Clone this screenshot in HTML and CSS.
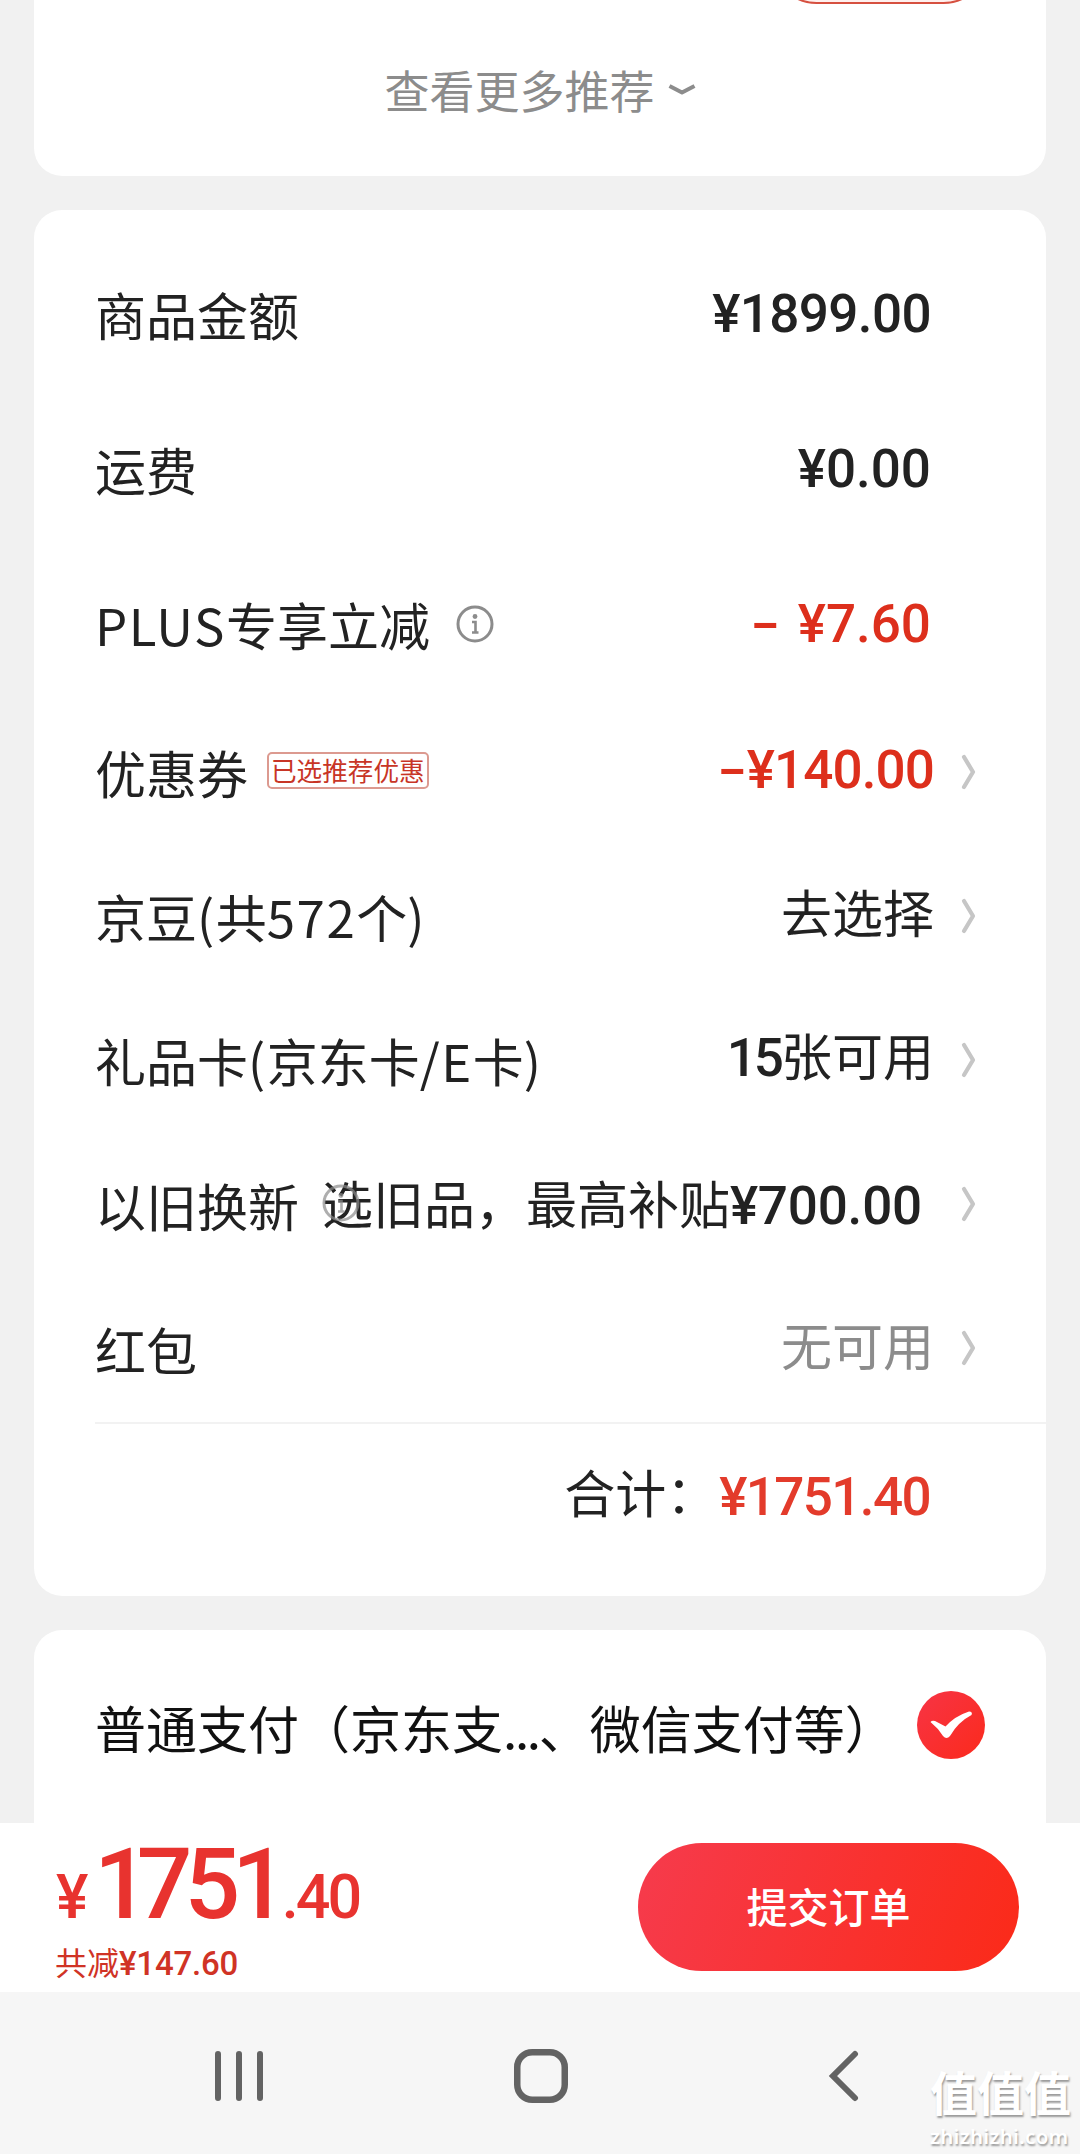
FILE: index.html
```html
<!DOCTYPE html>
<html lang="zh-CN">
<head>
<meta charset="utf-8">
<title>确认订单</title>
<link rel="stylesheet" href="styles.css">
</head>
<body>
<svg class="defs" width="0" height="0" aria-hidden="true">
  <symbol id="info" viewBox="0 0 38 38"><circle cx="19" cy="19" r="17" fill="none" stroke="#8c8c8c" stroke-width="3"/><circle cx="19" cy="11.500" r="2.400" fill="#8c8c8c"/><path d="M16 17H19.500V27M16 27.500H22.500" fill="none" stroke="#8c8c8c" stroke-width="2.600"/></symbol>
  <symbol id="next" viewBox="0 0 15 36"><path d="M3 3L12 18L3 33" fill="none" stroke="#c6c6c6" stroke-width="4.200" stroke-linecap="round" stroke-linejoin="round"/></symbol>
</svg>
<main class="screen">
  <section class="card card-more">
    <div class="cut-button"></div>
    <div class="more"><span class="more-text">查看更多推荐</span><svg class="down" viewBox="0 0 28 14"><path d="M1.500 3L14 9.500L26.500 3" fill="none" stroke="#8c8c8c" stroke-width="4" stroke-linejoin="round"/></svg></div>
  </section>

  <section class="card summary">
    <div class="row goods"><span class="label">商品金额</span><span class="num">¥1899.00</span></div>
    <div class="row freight"><span class="label">运费</span><span class="num">¥0.00</span></div>
    <div class="row plus"><span class="label"><span class="latin">PLUS</span>专享立减</span><svg class="info"><use href="#info"/></svg><span class="num red"><span class="minus">-</span> ¥7.60</span></div>
    <div class="row link coupon"><span class="label">优惠券</span><span class="tag">已选推荐优惠</span><span class="num red"><span class="minus">-</span>¥140.00</span><svg class="next"><use href="#next"/></svg></div>
    <div class="row link beans"><span class="label">京豆<span class="latin">(</span>共<span class="latin">572</span>个<span class="latin">)</span></span><span class="value">去选择</span><svg class="next"><use href="#next"/></svg></div>
    <div class="row link gift"><span class="label">礼品卡<span class="latin">(</span>京东卡<span class="latin">/E</span>卡<span class="latin">)</span></span><span class="value"><span class="num count">15</span>张可用</span><svg class="next"><use href="#next"/></svg></div>
    <div class="row link trade"><span class="label">以旧换新</span><span class="value trade-value"><svg class="info under"><use href="#info"/></svg>选旧品，最高补贴<span class="num">¥700.00</span></span><svg class="next"><use href="#next"/></svg></div>
    <div class="row link packet"><span class="label">红包</span><span class="value muted">无可用</span><svg class="next"><use href="#next"/></svg></div>
    <div class="total"><span class="label">合计：</span><span class="num">¥1751.40</span></div>
  </section>

  <section class="card pay">
    <span class="label">普通支付（京东支<span class="dots">...</span>、微信支付等）</span>
    <svg class="check" viewBox="0 0 68 68"><defs><linearGradient id="red" x1="0" y1="0" x2="1" y2="1"><stop offset="0" stop-color="#f73445"/><stop offset="1" stop-color="#fb2a1c"/></linearGradient></defs><circle cx="34" cy="34" r="34" fill="url(#red)"/><path d="M13.500 31Q15 29 18 30L28.500 35.500Q38 25 52 20.500Q56 20.500 54.500 24Q41 31 33 45Q29.500 49 26 45Q21 37 13.500 31Z" fill="#fff"/></svg>
  </section>

  <footer class="checkout">
    <div class="sum">
      <div class="price"><span class="yen">¥</span><span class="whole"><span class="lead">1</span>751</span><span class="cents">.40</span></div>
      <div class="saved">共减<span class="saved-num">¥147.60</span></div>
    </div>
    <button class="submit">提交订单</button>
  </footer>

  <nav class="keys">
    <svg class="key recents" viewBox="0 0 48 52"><path d="M3 4V48M24 4V48M45 4V48" stroke="#636363" stroke-width="6" stroke-linecap="round"/></svg>
    <svg class="key home" viewBox="0 0 54 54"><rect x="3.250" y="3.250" width="47.500" height="47.500" rx="15" fill="none" stroke="#636363" stroke-width="6.500"/></svg>
    <svg class="key back" viewBox="0 0 32 52"><path d="M28 4L6 26L28 48" fill="none" stroke="#636363" stroke-width="6" stroke-linecap="round" stroke-linejoin="miter"/></svg>
  </nav>
  <div class="mark"><span class="mark-name">值值值</span><span class="mark-site">zhizhizhi.com</span></div>
</main>
</body>
</html>
```
FILE: styles.css
```css
* { box-sizing: border-box; }
body { margin: 0; background: #f1f1f1; color: #222; font-family: "Noto Sans CJK SC", sans-serif; }
.defs { position: absolute; }
.screen { position: relative; width: 1080px; height: 2154px; overflow: hidden; display: flex; flex-direction: column; }
.card { flex: none; margin: 0 34px; background: #fff; border-radius: 28px; }
.card-more { height: 176px; border-radius: 0 0 28px 28px; margin-bottom: 34px; position: relative; display: flex; justify-content: center; padding-top: 56px; }
.cut-button { position: absolute; right: 58px; top: -85px; width: 216px; height: 89px; border: 2px solid #d65040; border-radius: 45px; background: #fff0ee; }
.more { display: flex; align-items: center; height: 68px; gap: 13px; color: #8c8c8c; font-size: 45px; line-height: 68px; }
.down { width: 28px; height: 14px; }

.summary { height: 1386px; padding: 26px 0 0 61px; display: flex; flex-direction: column; }
.row { display: flex; align-items: center; flex: none; padding-right: 115px; height: 155px; }
.row.link { padding-right: 70px; height: 144.2px; }
.label, .value { font-size: 51px; line-height: 72px; white-space: nowrap; }
.link .label { margin-bottom: 2px; }
.latin { letter-spacing: 1.5px; }
.num { font-family: Roboto, "Noto Sans CJK SC", sans-serif; font-weight: 500; font-size: 53px; line-height: 72px; white-space: nowrap; }
.row > .num, .row > .value { margin-left: auto; }
.row.link > .num { margin-bottom: 7px; }
.row.link > .value { margin-bottom: 12px; }
.row.gift > .value { margin-bottom: 10px; }
.row.trade > .value { margin-bottom: 4px; }
.goods .num { letter-spacing: -.6px; }
.coupon .num { letter-spacing: -.9px; }
.minus { display: inline-block; width: 29px; transform: scaleX(1.6); transform-origin: 0 50%; }
.plus .minus { width: 34px; }
.red { color: #dd2f1c; }
.info { width: 38px; height: 38px; margin-left: 26px; }
.next { width: 15px; height: 36px; margin: 0 0 3px 27px; }
.tag { margin: 0 0 6px 19px; border: 2px solid #dc9a90; border-radius: 5px; color: #c83526; font-size: 25.6px; line-height: 31px; height: 37px; padding: 0 2px; }
.muted { color: #8c8c8c; }
.trade-value { position: relative; padding-right: 12px; }
.trade-value .num { letter-spacing: -.2px; }
.under { position: absolute; left: 0; top: 18px; margin: 0; opacity: .7; }
.total { border-top: 2px solid #f2f2f2; display: flex; align-items: center; justify-content: flex-end; height: 145px; padding-right: 115px; }
.total .label { margin: 0 2px 8px 0; }
.total .num { color: #e33b2b; letter-spacing: -1.6px; margin-right: 1px; margin-top: 3px; }
.count { letter-spacing: -3px; }

.pay { margin-top: 34px; height: 193px; border-radius: 28px 28px 0 0; padding: 0 61px 0 61px; display: flex; align-items: center; justify-content: space-between; }
.pay .label { color: #111; }
.dots { letter-spacing: -2.3px; }
.check { width: 68px; height: 68px; margin-bottom: 4px; }

.checkout { flex: none; height: 169px; background: #fff; padding: 0 61px 0 55px; display: flex; align-items: center; justify-content: space-between; }
.sum { font-family: Roboto, "Noto Sans CJK SC", sans-serif; font-weight: 500; color: #e8332f; }
.price { display: flex; align-items: baseline; height: 110px; line-height: 110px; padding-top: 1px; }
.yen { font-size: 61px; width: 39px; padding-left: 1px; }
.whole { font-size: 98px; letter-spacing: -8px; }
.lead { letter-spacing: -13px; }
.cents { font-size: 61px; letter-spacing: -3px; margin-left: 2px; }
.saved { font-family: "Noto Sans CJK SC", sans-serif; font-weight: 400; font-size: 32px; line-height: 44px; color: #d03325; }
.saved-num { font-family: Roboto, sans-serif; font-weight: 500; font-size: 33px; letter-spacing: -.2px; }
.submit { width: 381px; height: 128px; margin-bottom: 2px; padding: 0 0 4px; border: 0; border-radius: 64px; background: linear-gradient(110deg, #f63b4d, #fb2a18); color: #fff; font: 500 41px/60px "Noto Sans CJK SC", sans-serif; }

.keys { flex: none; height: 162px; background: #f6f6f6; display: flex; align-items: center; padding: 6px 0 0 215px; }
.recents { width: 48px; height: 52px; }
.home { width: 54px; height: 54px; margin-left: 251px; }
.back { width: 32px; height: 52px; margin-left: 259px; }
.mark { position: absolute; left: 930px; top: 2062px; display: flex; flex-direction: column; color: #fff; text-shadow: 1px 2px 2px #999; white-space: nowrap; }
.mark-name { font-size: 47px; line-height: 58px; font-weight: 700; }
.mark-site { font: 600 20.5px/24px "Noto Sans", sans-serif; margin-top: 4px; letter-spacing: .3px; }
```
